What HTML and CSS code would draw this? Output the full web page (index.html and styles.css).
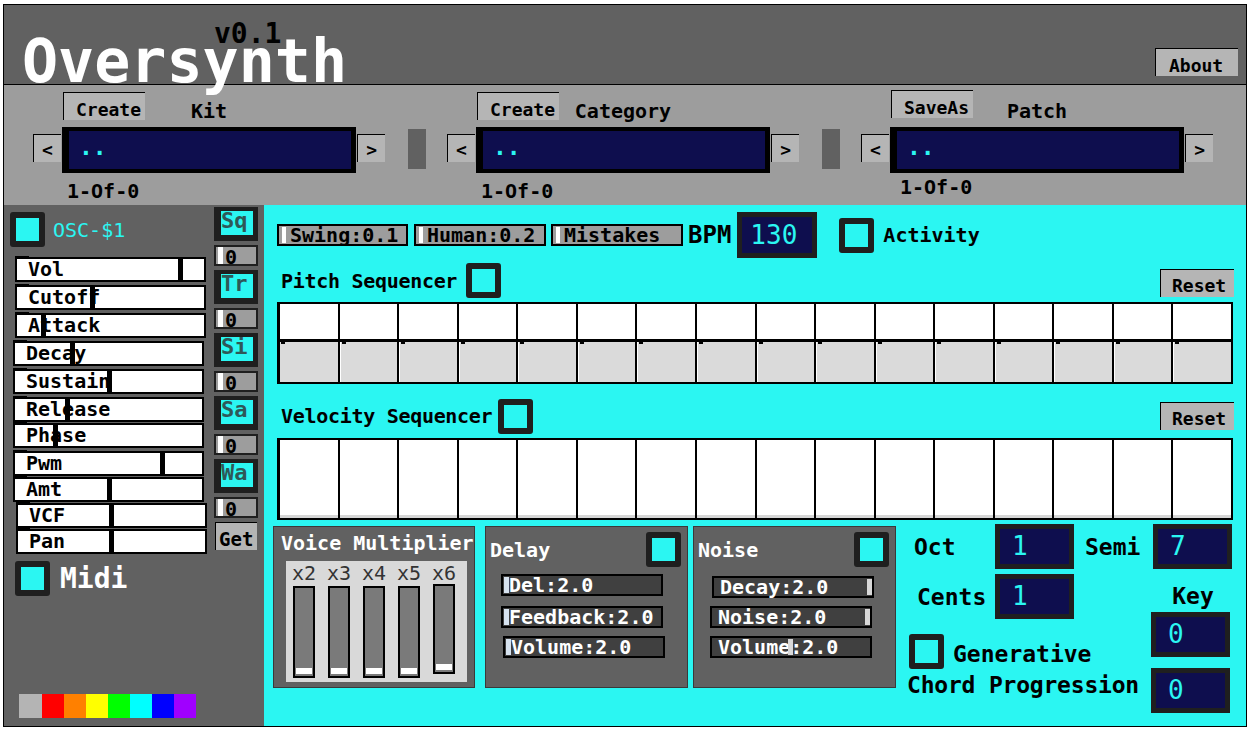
FILE: index.html
```html
<!DOCTYPE html>
<html lang="en">
<head>
<meta charset="utf-8">
<title>Oversynth</title>
<link rel="stylesheet" href="styles.css">
</head>
<body>
<div class="app">
  <header class="header">
    <div class="brand">
      <div class="version">v0.1</div>
      <div class="title">Oversynth</div>
    </div>
    <div class="btn about">About</div>
  </header>

  <section class="band">
    <div class="group">
      <div class="g-top">
        <div class="btn create">Create</div>
        <div class="g-label">Kit</div>
      </div>
      <div class="g-mid">
        <div class="btn arrow">&lt;</div>
        <div class="display">..</div>
        <div class="btn arrow">&gt;</div>
      </div>
      <div class="g-count">1-Of-0</div>
    </div>
    <div class="sep"></div>
    <div class="group">
      <div class="g-top">
        <div class="btn create">Create</div>
        <div class="g-label">Category</div>
      </div>
      <div class="g-mid">
        <div class="btn arrow">&lt;</div>
        <div class="display">..</div>
        <div class="btn arrow">&gt;</div>
      </div>
      <div class="g-count">1-Of-0</div>
    </div>
    <div class="sep"></div>
    <div class="group patch">
      <div class="g-top">
        <div class="btn create">SaveAs</div>
        <div class="g-label">Patch</div>
      </div>
      <div class="g-mid">
        <div class="btn arrow">&lt;</div>
        <div class="display">..</div>
        <div class="btn arrow">&gt;</div>
      </div>
      <div class="g-count">1-Of-0</div>
    </div>
  </section>

  <main class="main">
    <aside class="left">
      <div class="osc">
        <div class="osc-head"><span class="cb"></span><span class="osc-name">OSC-$1</span></div>
        <div class="sliders">
          <div class="slider">Vol<i class="knob" style="left:161px"></i></div>
          <div class="slider">Cutoff<i class="knob" style="left:73px"></i></div>
          <div class="slider">Attack<i class="knob" style="left:24px"></i></div>
          <div class="slider sl">Decay<i class="knob" style="left:55px"></i></div>
          <div class="slider sl">Sustain<i class="knob" style="left:92px"></i></div>
          <div class="slider sl">Release<i class="knob" style="left:50px"></i></div>
          <div class="slider sl tight">Phase<i class="knob" style="left:38px"></i></div>
          <div class="slider sl">Pwm<i class="knob" style="left:145px"></i></div>
          <div class="slider sl tight">Amt<i class="knob" style="left:92px"></i></div>
          <div class="slider sr tight">VCF<i class="knob" style="left:91px"></i></div>
          <div class="slider sr tight">Pan<i class="knob" style="left:91px"></i></div>
        </div>
        <div class="midi"><span class="cb"></span><span class="midi-label">Midi</span></div>
      </div>
      <div class="waves">
        <div class="wbtn">Sq</div>
        <div class="zero"><i></i>0</div>
        <div class="wbtn">Tr</div>
        <div class="zero"><i></i>0</div>
        <div class="wbtn">Si</div>
        <div class="zero"><i></i>0</div>
        <div class="wbtn">Sa</div>
        <div class="zero"><i></i>0</div>
        <div class="wbtn">Wa</div>
        <div class="zero"><i></i>0</div>
        <div class="btn get">Get</div>
      </div>
      <div class="palette">
        <span class="c1"></span><span class="c2"></span><span class="c3"></span><span class="c4"></span>
        <span class="c5"></span><span class="c6"></span><span class="c7"></span><span class="c8"></span>
      </div>
    </aside>

    <section class="right">
      <div class="transport">
        <div class="pill"><i></i>Swing:0.1</div>
        <div class="pill"><i></i>Human:0.2</div>
        <div class="pill last"><i></i>Mistakes</div>
        <div class="bpm-label">BPM</div>
        <div class="numbox bpm">130</div>
        <span class="cb act-cb"></span>
        <span class="act-label">Activity</span>
      </div>

      <div class="seq-head">
        <span class="seq-title">Pitch Sequencer</span>
        <span class="cb"></span>
        <div class="btn reset pitch-reset">Reset</div>
      </div>
      <div class="grid">
        <div class="pcell"><div class="pt"></div><div class="pb"></div></div>
        <div class="pcell"><div class="pt"></div><div class="pb"></div></div>
        <div class="pcell"><div class="pt"></div><div class="pb"></div></div>
        <div class="pcell"><div class="pt"></div><div class="pb"></div></div>
        <div class="pcell"><div class="pt"></div><div class="pb"></div></div>
        <div class="pcell"><div class="pt"></div><div class="pb"></div></div>
        <div class="pcell"><div class="pt"></div><div class="pb"></div></div>
        <div class="pcell"><div class="pt"></div><div class="pb"></div></div>
        <div class="pcell"><div class="pt"></div><div class="pb"></div></div>
        <div class="pcell"><div class="pt"></div><div class="pb"></div></div>
        <div class="pcell"><div class="pt"></div><div class="pb"></div></div>
        <div class="pcell"><div class="pt"></div><div class="pb"></div></div>
        <div class="pcell"><div class="pt"></div><div class="pb"></div></div>
        <div class="pcell"><div class="pt"></div><div class="pb"></div></div>
        <div class="pcell"><div class="pt"></div><div class="pb"></div></div>
        <div class="pcell"><div class="pt"></div><div class="pb"></div></div>
      </div>

      <div class="seq-head vel-head">
        <span class="seq-title">Velocity Sequencer</span>
        <span class="cb"></span>
        <div class="btn reset">Reset</div>
      </div>
      <div class="grid">
        <div class="vcell"></div><div class="vcell"></div><div class="vcell"></div><div class="vcell"></div>
        <div class="vcell"></div><div class="vcell"></div><div class="vcell"></div><div class="vcell"></div>
        <div class="vcell"></div><div class="vcell"></div><div class="vcell"></div><div class="vcell"></div>
        <div class="vcell"></div><div class="vcell"></div><div class="vcell"></div><div class="vcell"></div>
      </div>

      <div class="bottom">
        <div class="panel vm">
          <div class="vm-title">Voice Multiplier</div>
          <div class="vm-box">
            <div class="vcol"><div class="vlabel">x2</div><div class="vslider"><i></i></div></div>
            <div class="vcol"><div class="vlabel">x3</div><div class="vslider"><i></i></div></div>
            <div class="vcol"><div class="vlabel">x4</div><div class="vslider"><i></i></div></div>
            <div class="vcol"><div class="vlabel">x5</div><div class="vslider"><i></i></div></div>
            <div class="vcol alt"><div class="vlabel">x6</div><div class="vslider"><i></i></div></div>
          </div>
        </div>

        <div class="panel fx delay">
          <div class="fx-head"><span>Delay</span><span class="cb"></span></div>
          <div class="fslider d1"><i class="fthumb blue" style="left:1px"></i>Del:2.0</div>
          <div class="fslider d2"><i class="fthumb blue" style="left:1px"></i>Feedback:2.0</div>
          <div class="fslider d3"><i class="fthumb blue" style="left:1px"></i>Volume:2.0</div>
        </div>

        <div class="panel fx noise">
          <div class="fx-head"><span>Noise</span><span class="cb"></span></div>
          <div class="fslider n1"><i class="fthumb" style="left:153px"></i>Decay:2.0</div>
          <div class="fslider n2"><i class="fthumb" style="left:153px"></i>Noise:2.0</div>
          <div class="fslider n3"><i class="fthumb" style="left:76px"></i>Volume:2.0</div>
        </div>

        <div class="cluster">
          <div class="cl-left">
            <div class="crow">
              <span class="clabel">Oct</span>
              <div class="numbox">1</div>
              <span class="semi-label">Semi</span>
            </div>
            <div class="crow crow2">
              <span class="clabel">Cents</span>
              <div class="numbox">1</div>
            </div>
            <div class="gen"><span class="cb"></span><span class="gen-label">Generative</span></div>
            <div class="chord">Chord Progression</div>
          </div>
          <div class="cl-right">
            <div class="numbox">7</div>
            <div class="key-label">Key</div>
            <div class="numbox keybox">0</div>
            <div class="numbox keybox">0</div>
          </div>
        </div>
      </div>
    </section>
  </main>
</div>
</body>
</html>
```

FILE: styles.css
```css
* { box-sizing: border-box; margin: 0; padding: 0; }
html, body { background: #fff; }
body {
  font-family: "DejaVu Sans Mono", "Liberation Mono", monospace;
  font-weight: bold;
  color: #000;
}

.app {
  width: 1244px;
  height: 723px;
  margin: 4px 0 0 3px;
  border: 1px solid #000;
  overflow: hidden;
}

/* ---------- header ---------- */
.header {
  height: 80px;
  background: #616161;
  border-bottom: 1px solid #000;
  display: flex;
  align-items: flex-end;
}
.brand { align-self: flex-start; padding-top: 15px; margin-left: 18px; }
.version { font-size: 28px; line-height: 28px; margin-left: 192px; }
.title { font-size: 60px; line-height: 60px; margin-top: -17px; color: #fff; }

.btn {
  background: #b5b5b5;
  border-top: 1px solid #000;
  border-left: 1px solid #000;
  font-size: 18px;
  color: #000;
  white-space: nowrap;
}
.about {
  margin: 0 8px 8px auto;
  width: 83px;
  height: 28px;
  padding: 7px 0 0 13px;
  line-height: 20px;
}

/* ---------- kit / category / patch band ---------- */
.band {
  height: 120px;
  background: #9d9d9d;
  display: flex;
  align-items: flex-start;
  padding-left: 29px;
}
.group { width: 352px; flex: none; }
.g-top { display: grid; height: 28px; margin-top: 7px; }
.g-top > * { grid-area: 1 / 1; }
.create {
  justify-self: start;
  margin-left: 30px;
  width: 82px;
  height: 28px;
  padding: 7px 0 0 12px;
  line-height: 20px;
}
.g-label { justify-self: center; font-size: 20px; line-height: 20px; padding-top: 9px; }
.g-mid { display: flex; align-items: flex-start; margin-top: 7px; height: 46px; }
.arrow {
  width: 28px;
  height: 28px;
  margin-top: 7px;
  text-align: center;
  padding-top: 2px;
  line-height: 25px;
}
.display {
  width: 295px;
  height: 46px;
  margin: 0 1px;
  border-style: solid;
  border-color: #000;
  border-width: 4px 5px 4px 7px;
  background: #0e0e4e;
  color: #2bf6f2;
  font-size: 23px;
  line-height: 33px;
  padding-left: 10px;
}
.g-count { font-size: 20px; line-height: 20px; margin: 8px 0 0 34px; }
.sep { width: 18px; height: 40px; margin: 44px 21px 0 23px; background: #616161; flex: none; }
.patch .create { margin-top: -2px; }
.patch .g-count { margin: 4px 0 0 39px; }

/* ---------- main ---------- */
.main { height: 521px; display: flex; }

.left {
  width: 260px;
  flex: none;
  background: #616161;
  display: grid;
  grid-template-columns: 210px 44px;
  grid-template-rows: auto 1fr;
}
.cb {
  display: block;
  width: 35px;
  height: 35px;
  border: 6px solid #1f1f1f;
  border-radius: 3px;
  background: #2bf6f2;
  flex: none;
}
.osc { padding-top: 7px; }
.osc-head { display: flex; align-items: center; margin-left: 6px; }
.osc-name { color: #2bf6f2; font-weight: normal; font-size: 20px; margin-left: 8px; }
.sliders { margin-top: 10px; }
.slider {
  position: relative;
  width: 191px;
  height: 25px;
  margin: 3px 0 0 11px;
  border: 2px solid #000;
  background: #fff;
  font-size: 20px;
  line-height: 20px;
  padding-left: 11px;
}
.slider:first-child { margin-top: 0; }
.slider.sl { margin-left: 9px; }
.slider.sr { margin-left: 12px; }
.slider.tight { margin-top: 1px; }
.slider::before {
  content: "";
  position: absolute;
  left: -2px;
  top: -3px;
  width: 14px;
  height: 3px;
  background: #000;
}
.knob { position: absolute; top: 0; bottom: 0; width: 5px; background: #000; }

.midi { display: flex; align-items: center; margin: 7px 0 0 11px; }
.midi-label { color: #fff; font-size: 28px; margin-left: 10px; }

.waves { padding-top: 2px; }
.wbtn {
  height: 34px;
  border-style: solid;
  border-color: #1f1f1f;
  border-width: 4px 5px 6px 7px;
  background: #2bf6f2;
  font-size: 22px;
  line-height: 19px;
  color: #2e5858;
  overflow: hidden;
  white-space: nowrap;
  margin-bottom: 4px;
}
.zero {
  position: relative;
  height: 21px;
  border: 2px solid #1f1f1f;
  background: #9d9d9d;
  font-size: 20px;
  line-height: 20px;
  padding-left: 9px;
  margin-bottom: 4px;
}
.zero i { position: absolute; left: 2px; top: 0; bottom: 0; width: 5px; background: #fff; }
.get {
  width: 42px;
  height: 28px;
  margin: 4px 0 0 1px;
  padding: 6px 0 0 3px;
  font-size: 19px;
  line-height: 20px;
}

.palette { grid-column: 1 / 3; align-self: end; display: flex; margin: 0 0 8px 15px; }
.palette span { width: 22px; height: 24px; }
.palette .c1 { background: #b4b4b4; width: 23px; }
.palette .c2 { background: #ff0000; }
.palette .c3 { background: #ff8000; }
.palette .c4 { background: #ffff00; }
.palette .c5 { background: #00ff00; }
.palette .c6 { background: #00ffff; }
.palette .c7 { background: #0000ff; }
.palette .c8 { background: #a000ff; }

/* ---------- right ---------- */
.right {
  flex: 1;
  background: #2bf6f2;
  padding: 7px 13px 0 13px;
  display: flex;
  flex-direction: column;
}
.transport { display: flex; align-items: center; height: 46px; }
.pill {
  position: relative;
  width: 131px;
  height: 22px;
  border: 2px solid #000;
  background: #9d9d9d;
  font-size: 20px;
  line-height: 18px;
  padding-left: 11px;
  margin-right: 6px;
  white-space: nowrap;
}
.pill + .pill { width: 132px; margin-right: 5px; }
.pill.last { margin-right: 0; }
.pill i { position: absolute; left: 3px; top: 1px; bottom: 1px; width: 4px; background: #fff; }
.bpm-label { font-size: 24px; margin-left: 5px; }
.numbox {
  width: 79px;
  height: 45px;
  border: 5px solid #1f1f1f;
  background: #0e0e4e;
  color: #2bf6f2;
  font-weight: normal;
  font-size: 26px;
  line-height: 35px;
  padding-left: 12px;
  flex: none;
}
.bpm { width: 80px; height: 46px; margin-left: 6px; padding-left: 8px; line-height: 36px; }
.act-cb { margin-left: 22px; }
.act-label { font-size: 20px; margin-left: 9px; }

.seq-head { display: flex; align-items: center; height: 35px; margin-top: 5px; }
.seq-title { font-size: 20px; margin-left: 4px; white-space: nowrap; letter-spacing: -0.3px; }
.seq-head .cb { margin-left: 9px; }
.vel-head { margin-top: 14px; height: 36px; }
.vel-head .cb { margin-left: 6px; }
.reset {
  margin-left: auto;
  margin-right: -1px;
  width: 74px;
  height: 28px;
  padding: 6px 0 0 11px;
  line-height: 20px;
}
.pitch-reset { margin-top: 5px; }

.grid {
  display: grid;
  grid-template-columns: repeat(16, 1fr);
  column-gap: 2px;
  background: #000;
  border: 2px solid #000;
  border-left-width: 3px;
  margin-top: 4px;
}
.pcell { display: flex; flex-direction: column; }
.pt { height: 35px; background: #fff; }
.pb {
  position: relative;
  height: 40px;
  margin-top: 3px;
  background: #dadada;
  border-left: 1px solid #fff;
}
.pcell:first-child .pb { border-left: 0; }
.pb::before {
  content: "";
  position: absolute;
  left: 1px;
  top: 0;
  width: 4px;
  height: 2px;
  background: #000;
}
.vcell { height: 78px; background: #fff; border-bottom: 3px solid #d6d6d6; }

/* ---------- bottom panels ---------- */
.bottom { display: flex; align-items: flex-start; margin: 6px 0 0 -4px; }
.panel {
  width: 203px;
  height: 162px;
  background: #616161;
  border: 1px solid #3a3a3a;
  color: #fff;
  flex: none;
}
.vm { width: 202px; }
.vm-title { font-size: 20px; line-height: 20px; padding: 6px 0 0 7px; white-space: nowrap; }
.vm-box {
  width: 181px;
  height: 121px;
  margin: 8px 0 0 12px;
  background: #d9d9d9;
  display: flex;
  padding-left: 7px;
  gap: 13px;
}
.vcol { width: 22px; display: flex; flex-direction: column; align-items: center; }
.vlabel {
  font-weight: normal;
  font-size: 20px;
  line-height: 20px;
  height: 25px;
  padding-top: 2px;
  color: #333;
  white-space: nowrap;
}
.vslider { position: relative; width: 22px; height: 92px; border: 2px solid #000; background: #7a7a7a; }
.vslider i { position: absolute; left: 1px; right: 1px; bottom: 2px; height: 6px; background: #fff; }
.vcol.alt .vslider { margin-top: -2px; height: 90px; }

.delay { margin-left: 10px; }
.noise { margin-left: 5px; }
.fx-head {
  display: flex;
  align-items: center;
  justify-content: space-between;
  padding: 5px 6px 0 4px;
  font-size: 20px;
}
.fslider {
  position: relative;
  width: 162px;
  height: 22px;
  border: 2px solid #000;
  background: #404040;
  font-size: 20px;
  line-height: 19px;
  padding-left: 6px;
  color: #fff;
  white-space: nowrap;
}
.fthumb { position: absolute; top: 1px; bottom: 1px; width: 5px; background: #d8d8d8; }
.fthumb.blue { background: #d6e2ef; }
.d1 { margin: 7px 0 0 15px; }
.d2 { margin: 10px 0 0 15px; }
.d3 { margin: 8px 0 0 17px; }
.n1 { margin: 9px 0 0 18px; }
.n2 { margin: 8px 0 0 16px; }
.n3 { margin: 8px 0 0 16px; }

/* ---------- oct / semi / key cluster ---------- */
.cluster { display: flex; margin: -2px 0 0 13px; }
.cl-left { width: 244px; }
.crow { display: flex; align-items: center; height: 45px; }
.clabel { font-size: 23px; width: 86px; padding-left: 5px; flex: none; }
.semi-label { font-size: 23px; margin-left: 11px; }
.crow2 { margin-top: 5px; }
.crow2 .clabel { padding-left: 8px; }
.gen { display: flex; align-items: center; margin-top: 15px; }
.gen-label { font-size: 23px; margin-left: 9px; padding-top: 5px; }
.chord { font-size: 23px; line-height: 28px; margin: 2px 0 0 -2px; white-space: nowrap; letter-spacing: -0.2px; }
.cl-right { width: 80px; }
.key-label { font-size: 23px; line-height: 26px; height: 26px; margin-top: 14px; text-align: center; }
.keybox { margin: 3px 0 0 -2px; }
.keybox + .keybox { margin-top: 11px; }
```
